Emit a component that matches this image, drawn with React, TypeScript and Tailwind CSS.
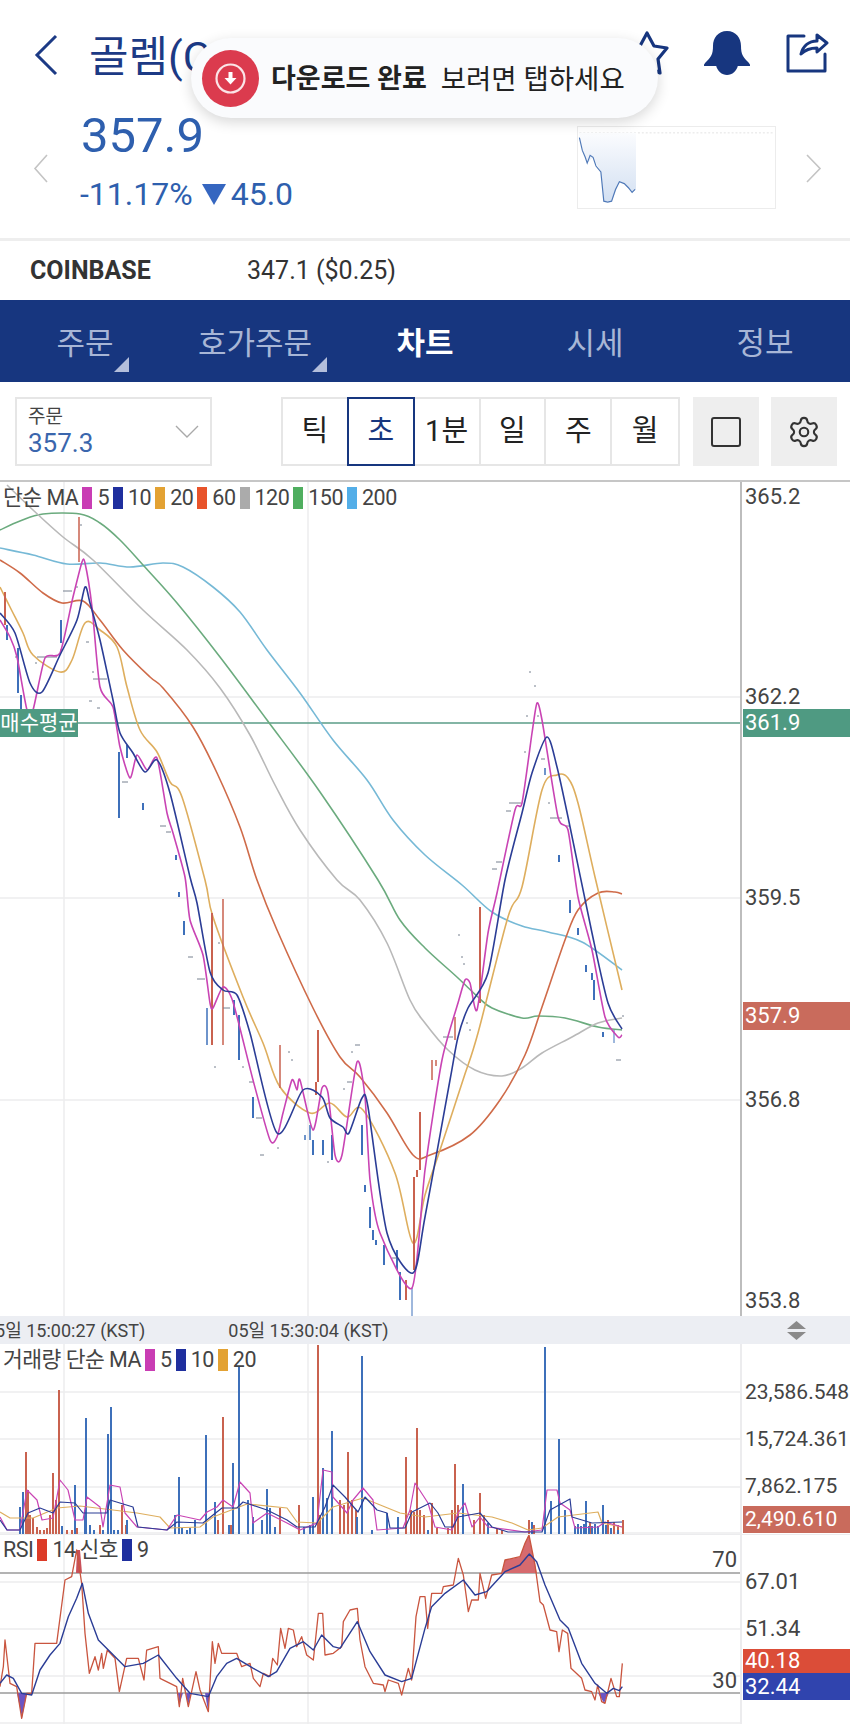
import React from 'react';
import { Settings } from 'lucide-react';

type Pt = number[];

const pts = (list: Pt[]) => list.map((p) => `${p[0]},${p[1]}`).join(' ');
// RSI lines were read off 3x crops, left half and right half of the page
const left = (list: Pt[]) => list.map((p) => [p[0] / 3, 1300 + p[1] / 3]);
const right = (list: Pt[]) => list.map((p) => [425 + p[0] / 3, 1300 + p[1] / 3]);

// catmull-rom through the points, the moving averages are smooth curves
const smooth = (list: Pt[], k = 1) => {
  let d = `M${list[0][0]} ${list[0][1]}`;
  for (let i = 0; i < list.length - 1; i++) {
    const p0 = list[i - 1] || list[i];
    const p1 = list[i];
    const p2 = list[i + 1];
    const p3 = list[i + 2] || p2;
    const c1x = p1[0] + ((p2[0] - p0[0]) / 6) * k;
    const c1y = p1[1] + ((p2[1] - p0[1]) / 6) * k;
    const c2x = p2[0] - ((p3[0] - p1[0]) / 6) * k;
    const c2y = p2[1] - ((p3[1] - p1[1]) / 6) * k;
    d += `C${c1x.toFixed(1)} ${c1y.toFixed(1)} ${c2x.toFixed(1)} ${c2y.toFixed(1)} ${p2[0]} ${p2[1]}`;
  }
  return d;
};

const COLORS = {
  ma5: '#c944b4',
  ma10: '#2b3d96',
  ma20: '#deae5e',
  ma60: '#cf6b49',
  ma120: '#b9b9b9',
  ma150: '#6bab7e',
  ma200: '#76b9d6',
  up: '#c9624f',
  down: '#3e70ba',
};

const ma150: Pt[] = [[0,530],[20,521],[43,514],[80,514],[100,523],[120,540],[143,565],[177,603],[220,657],[267,720],[320,792],[378,880],[400,920],[425,948],[458,978],[478,997],[492,1008],[522,1018],[538,1016],[565,1018],[598,1027],[622,1030]];
const ma200: Pt[] = [[0,548],[33,555],[67,564],[100,563],[130,567],[163,563],[183,567],[213,587],[240,612],[267,650],[300,693],[333,740],[367,780],[393,820],[425,855],[462,885],[492,912],[522,926],[548,932],[582,942],[622,970]];
const ma120: Pt[] = [[7,485],[33,510],[63,537],[93,560],[143,610],[187,650],[220,688],[250,735],[275,785],[300,830],[337,880],[360,900],[387,943],[410,1000],[425,1023],[448,1050],[475,1070],[502,1076],[522,1068],[542,1053],[572,1037],[598,1023],[622,1018]];
const ma60: Pt[] = [[0,560],[20,573],[43,593],[62,603],[83,601],[100,620],[123,650],[150,677],[163,688],[193,727],[217,773],[240,827],[257,880],[277,930],[313,1008],[340,1057],[360,1077],[387,1113],[413,1155],[430,1155],[470,1135],[500,1100],[525,1055],[542,1007],[565,940],[578,910],[598,893],[615,892],[622,894]];
const ma20: Pt[] = [[0,587],[10,607],[23,633],[33,655],[60,672],[72,660],[85,623],[100,630],[117,647],[127,687],[140,730],[157,752],[170,782],[182,797],[205,880],[213,917],[243,997],[263,1043],[280,1087],[310,1113],[330,1103],[347,1117],[363,1110],[395,1173],[413,1243],[425,1195],[440,1150],[463,1080],[478,1033],[508,917],[522,887],[542,790],[557,775],[568,778],[578,803],[595,877],[622,990]];
const ma10: Pt[] = [[0,613],[15,633],[30,683],[42,692],[60,655],[77,620],[85,587],[90,603],[100,640],[113,700],[120,733],[133,753],[145,772],[157,760],[170,793],[190,877],[197,903],[210,972],[223,990],[237,995],[250,1033],[277,1133],[303,1090],[322,1097],[330,1118],[343,1127],[349,1133],[362,1098],[368,1107],[387,1233],[413,1273],[425,1217],[450,1080],[458,1037],[468,1008],[488,973],[505,880],[522,813],[532,773],[547,737],[557,767],[568,817],[592,933],[608,1003],[622,1029]];
const ma5: Pt[] = [[0,620],[10,637],[17,657],[27,710],[33,710],[45,658],[60,653],[73,597],[82,562],[85,563],[92,607],[100,687],[113,707],[120,747],[130,778],[137,755],[147,770],[157,758],[167,813],[173,833],[185,877],[190,920],[203,955],[210,1003],[213,1008],[223,987],[233,1002],[253,1080],[270,1140],[277,1137],[283,1113],[292,1080],[297,1090],[300,1080],[313,1130],[322,1088],[328,1093],[335,1155],[342,1155],[357,1062],[365,1097],[370,1180],[380,1233],[412,1288],[425,1170],[442,1060],[458,1003],[465,980],[470,983],[477,1010],[488,933],[497,893],[515,810],[522,803],[532,733],[537,703],[542,720],[558,817],[568,830],[578,897],[592,950],[605,1017],[618,1037],[622,1035]];

// x, top, bottom, width
const candles: { c: string; b: number[][] }[] = [
  { c: COLORS.up, b: [[79,517,562,1.5],[5,592,625,2],[212,913,1045,2],[223,899,1045,1.5],[280,1045,1088,1.5],[318,1030,1082,2],[316,1082,1095,2],[406,1280,1300,2],[414,1177,1270,2],[417,1170,1177,2],[420,1112,1170,2],[432,1060,1080,1.5],[436,1060,1066,1.5],[455,1017,1040,1.5],[480,907,1003,2]] },
  { c: COLORS.down, b: [[7,625,640,2],[18,648,693,2],[21,695,715,2],[61,620,643,2],[119,752,818,2],[127,745,758,2],[143,803,810,2],[176,855,860,2],[179,892,897,2],[184,921,935,2],[207,1008,1045,1.5],[234,1000,1015,2],[239,1015,1060,2],[253,1097,1118,2],[305,1135,1140,1.5],[310,1125,1140,1.5],[313,1140,1155,2],[323,1140,1155,2],[332,1135,1160,2],[362,1125,1155,2],[365,1185,1192,2],[370,1207,1228,2],[373,1230,1240,2],[376,1240,1245,2],[384,1245,1265,2],[397,1250,1270,2],[400,1272,1300,2],[412,1288,1316,1],[545,768,775,1.5],[559,855,862,2],[570,900,913,2],[578,928,935,2],[586,965,972,2],[592,973,980,2],[594,980,1000,2],[603,1032,1037,2],[614,1030,1043,1]] },
];

const dashes: number[][] = [[80,525,2],[63,591,9],[75,587,3],[86,642,3],[92,672,2],[93,679,14],[89,701,3],[97,708,3],[35,663,2],[15,657,2],[37,657,20],[60,650,3],[122,782,6],[160,826,6],[166,832,5],[188,957,5],[197,979,8],[218,943,2],[223,1008,7],[214,1067,2],[242,1067,2],[249,1082,5],[256,1118,6],[260,1155,4],[277,1148,2],[288,1052,2],[291,1060,2],[355,1045,5],[351,1052,2],[347,1082,5],[343,1089,2],[327,1162,2],[392,1258,5],[529,672,2],[534,686,2],[526,716,2],[537,716,2],[524,752,2],[541,759,4],[509,803,12],[506,811,5],[548,803,2],[550,818,12],[566,826,4],[496,862,6],[492,869,5],[458,935,2],[461,957,2],[463,964,2],[443,1037,10],[466,1023,2],[469,1030,2],[616,1060,5],[622,1016,2]];

const volUp: number[][] = [[26,1452],[28,1490],[53,1473],[59,1390],[223,1417],[318,1345],[348,1452],[406,1457],[417,1428],[455,1464],[480,1493],[529,1520],[623,1520],[608,1520],[30,1515],[33,1518],[37,1527],[40,1530],[44,1530],[47,1528],[50,1515],[56,1500],[62,1530],[67,1530],[72,1530],[77,1528],[100,1525],[122,1505],[126,1525],[218,1520],[231,1525],[280,1508],[299,1505],[320,1515],[340,1500],[344,1505],[352,1500],[356,1510],[411,1510],[414,1512],[420,1510],[424,1515],[432,1503],[437,1528],[448,1528],[452,1510],[458,1505],[474,1520],[484,1515],[497,1528],[502,1530],[534,1525],[614,1522],[618,1525],[590,1522]];
const volDown: number[][] = [[23,1492],[20,1507],[75,1485],[86,1418],[108,1434],[111,1407],[179,1477],[206,1435],[233,1463],[239,1367],[248,1500],[267,1489],[313,1497],[323,1468],[327,1498],[332,1431],[362,1356],[398,1517],[463,1484],[488,1523],[532,1522],[545,1347],[551,1501],[559,1439],[565,1510],[586,1501],[603,1505],[62,1526],[85,1510],[90,1525],[94,1530],[103,1530],[114,1530],[118,1530],[127,1520],[175,1515],[182,1528],[187,1530],[190,1528],[195,1520],[215,1502],[229,1525],[253,1517],[262,1520],[270,1508],[275,1527],[304,1527],[310,1525],[357,1517],[372,1530],[387,1513],[428,1530],[575,1526],[578,1524],[581,1526],[584,1524],[589,1526],[592,1526],[595,1524],[598,1526],[606,1525],[611,1528],[618,1530]];

const volMa5: Pt[] = [[0,1517],[7,1530],[20,1530],[27,1490],[37,1500],[42,1520],[53,1518],[60,1480],[68,1490],[75,1520],[83,1520],[87,1497],[100,1507],[103,1527],[110,1485],[120,1487],[125,1513],[137,1527],[167,1530],[177,1515],[200,1520],[207,1512],[217,1507],[223,1500],[233,1507],[240,1482],[250,1493],[253,1523],[267,1513],[287,1523],[300,1530],[317,1523],[323,1470],[332,1472],[333,1497],[347,1513],[353,1500],[363,1488],[373,1500],[377,1530],[403,1528],[410,1510],[415,1483],[428,1503],[435,1527],[452,1530],[458,1513],[465,1503],[472,1527],[480,1517],[488,1527],[525,1532],[542,1530],[547,1490],[557,1490],[560,1503],[570,1510],[575,1528],[598,1527],[605,1522],[622,1527]];
const volMa10: Pt[] = [[0,1520],[7,1530],[20,1530],[28,1513],[40,1508],[53,1513],[60,1502],[75,1503],[83,1513],[107,1513],[110,1500],[133,1507],[138,1527],[167,1530],[177,1522],[203,1523],[213,1515],[222,1508],[237,1508],[243,1502],[267,1510],[287,1520],[297,1527],[315,1527],[325,1507],[333,1485],[345,1497],[358,1512],[365,1497],[377,1510],[387,1513],[390,1528],[405,1528],[412,1512],[430,1503],[438,1513],[445,1527],[453,1527],[458,1517],[480,1513],[492,1527],[508,1532],[542,1532],[550,1510],[570,1499],[572,1517],[592,1523],[622,1522]];
const volMa20: Pt[] = [[0,1512],[10,1518],[33,1518],[57,1508],[80,1506],[113,1510],[137,1513],[160,1517],[170,1528],[200,1527],[213,1517],[247,1504],[287,1508],[297,1522],[317,1523],[333,1507],[363,1498],[400,1513],[425,1517],[458,1513],[492,1517],[512,1523],[528,1530],[542,1528],[558,1517],[598,1512],[602,1523],[622,1527]];

const rsiLine: Pt[] = [
  ...left([[0,1160],[10,1100],[15,1020],[30,1150],[50,1160],[65,1255],[80,1180],[95,1180],[105,1030],[170,1030],[195,840],[215,830],[230,750],[245,850],[255,1000],[268,1120],[285,1070],[295,1110],[305,1060],[310,1105],[322,1050],[345,1075],[358,1175],[380,1075],[415,1075],[432,1140],[440,1050],[475,1040],[480,1135],[530,1160],[538,1220],[548,1135],[565,1220],[588,1115],[600,1170],[625,1235],[637,1025],[645,1090],[655,1030],[665,1060],[710,1060],[725,1100],[750,1090],[760,1135],[780,1160],[790,1120],[810,1130],[818,1075],[832,1095],[842,985],[855,1045],[865,985],[880,990],[890,1040],[905,1010],[920,1065],[940,1080],[955,940],[968,940],[975,1065],[1000,1060],[1025,1040],[1030,965],[1050,930],[1072,925],[1080,1020],[1095,1100],[1120,1150],[1150,1155],[1155,1175],[1165,1140],[1195,1150],[1205,1185],[1225,1105],[1235,1140],[1248,950],[1260,890],[1275,890]]),
  ...right([[8,985],[20,880],[50,880],[55,860],[85,855],[100,775],[115,825],[130,935],[140,900],[160,900],[165,820],[182,895],[200,825],[230,820],[240,780],[285,770],[300,730],[312,705],[330,795],[345,905],[355,915],[375,990],[395,995],[402,1055],[412,990],[428,1000],[438,1105],[470,1135],[480,1170],[500,1175],[510,1200],[518,1155],[530,1205],[540,1210],[558,1135],[575,1190],[583,1190],[592,1090]]),
];
const rsiSignal: Pt[] = [
  ...left([[0,1150],[20,1125],[40,1135],[65,1180],[95,1185],[120,1110],[150,1065],[180,1030],[205,950],[230,895],[247,850],[265,940],[295,1020],[340,1065],[375,1100],[430,1090],[475,1065],[530,1135],[570,1180],[625,1190],[650,1130],[680,1090],[710,1075],[760,1105],[805,1130],[830,1115],[870,1045],[910,1025],[940,1050],[965,1005],[1000,1040],[1020,1045],[1072,965],[1110,1055],[1155,1125],[1205,1145],[1235,1135],[1275,985]]),
  ...right([[20,920],[60,880],[115,840],[150,885],[185,875],[240,815],[285,795],[313,762],[335,785],[360,855],[405,960],[430,985],[470,1090],[510,1150],[545,1180],[565,1165],[583,1172],[592,1160]]),
];

function Line({ data, color, width = 1.4 }: { data: Pt[]; color: string; width?: number }) {
  return <polyline points={pts(data)} fill="none" stroke={color} strokeWidth={width} strokeLinejoin="round" />;
}

function Curve({ data, color, width = 1.6, k = 1 }: { data: Pt[]; color: string; width?: number; k?: number }) {
  return <path d={smooth(data, k)} fill="none" stroke={color} strokeWidth={width} />;
}

function Grid({ ys, top, bottom }: { ys: number[]; top: number; bottom: number }) {
  return (
    <g stroke="#ececee" strokeWidth={1.5}>
      {ys.map((y) => <line key={y} x1={0} x2={740} y1={y} y2={y} />)}
      <line x1={64} x2={64} y1={top} y2={bottom} />
      <line x1={308} x2={308} y1={top} y2={bottom} />
    </g>
  );
}

function Legend({ label, items, top }: { label: React.ReactNode; items: [string, string][]; top: string }) {
  return (
    <div className={`absolute left-[3px] ${top} flex items-center h-[22px] text-[21.5px] tracking-[-0.5px] text-[#444] leading-none`}>
      <span className="whitespace-pre">{label}</span>
      {items.map(([color, text], i) => (
        <React.Fragment key={i}>
          {color === '' ? (
            <span className="ml-[4px]">{text}</span>
          ) : (
            <>
              <span className="ml-[4px] w-[10px] h-[22px]" style={{ background: color }} />
              <span className="ml-[5px]">{text}</span>
            </>
          )}
        </React.Fragment>
      ))}
    </div>
  );
}

function AxisText({ y, size = 'text-[22px]', children }: { y: number; size?: string; children: React.ReactNode }) {
  return (
    <div className={`absolute left-[3px] ${size} leading-[26px] text-[#444] whitespace-nowrap`} style={{ top: y - 13 }}>
      {children}
    </div>
  );
}

function AxisTag({ y, h, color, size = 'text-[22px]', children }: { y: number; h: number; color: string; size?: string; children: React.ReactNode }) {
  return (
    <div className={`absolute left-[1px] right-0 pl-[2px] flex items-center text-white ${size} leading-none`} style={{ top: y, height: h, background: color }}>
      {children}
    </div>
  );
}

export default function App() {
  return (
    <div className="relative w-[850px] h-[1724px] overflow-hidden bg-white [font-family:Roboto,'Noto_Sans_CJK_KR',sans-serif]">
      {/* header */}
      <div className="h-[238px]">
        <div className="h-[112px] flex items-start">
          <svg className="mt-[34px] ml-[34px] w-[24px] h-[42px]" viewBox="0 0 24 42" fill="none" stroke="#1c3a85" strokeWidth={3}>
            <path d="M22 2 3 21l19 19" />
          </svg>
          <span className="mt-[34px] ml-[31px] text-[43px] leading-[46px] text-[#1c3a85]">골렘(C</span>
          <svg className="ml-auto mt-[30px] mr-[33px] w-[46px] h-[46px]" viewBox="625 30 46 46" fill="none" stroke="#17367f" strokeWidth={3.2} strokeLinejoin="round">
            <path d="M647 33L654 46 667 48 658 59 660 73 647 66 634 73 636 59 627 48 640 46z" />
          </svg>
          <svg className="mt-[31px] mr-[35px] w-[46px] h-[44px]" viewBox="0 0 46 44" fill="#17367f">
            <path d="M23 0c9 0 14 7 14 15 0 8 2 11 6 15 2 2 3 3 3 4v1H0v-1c0-1 1-2 3-4 4-4 6-7 6-15C9 7 14 0 23 0z" />
            <path d="M12 34h22c-1 6-6 10-11 10s-10-4-11-10z" />
          </svg>
          <svg className="mt-[33px] mr-[21px] w-[44px] h-[40px]" viewBox="0 0 44 40" fill="none" stroke="#17367f" strokeWidth={3} strokeLinejoin="round" strokeLinecap="round">
            <path d="M19 3H3v35h37V21" />
            <path d="M42 10 32 2v6C24 8 18 13 16 21c4-4 10-6 16-6v4z" />
          </svg>
        </div>
        <div className="flex items-start">
          <svg className="mt-[42px] ml-[33px] w-[15px] h-[29px] shrink-0" viewBox="0 0 15 29" fill="none" stroke="#c4c4c4" strokeWidth={1.6}>
            <path d="M14 1 2 14.5 14 28" />
          </svg>
          <div className="ml-[33px] text-[#2e5fae]">
            <div className="text-[49px] leading-[48px]">357.9</div>
            <div className="mt-[14px] flex items-center text-[32px] leading-[40px] -ml-[1px]">
              <span>-11.17%</span>
              <svg className="ml-[9px] mr-[5px] w-[24px] h-[21px]" viewBox="0 0 24 21" fill="#3566c0"><path d="M0 0h24L12 21z" /></svg>
              <span>45.0</span>
            </div>
          </div>
          <svg className="ml-auto mt-[14px] w-[199px] h-[83px] border border-[#ececec]" viewBox="577 126 199 83">
            <defs>
              <linearGradient id="spark" x1="0" y1="0" x2="0" y2="1">
                <stop offset="0" stopColor="#fbfcfe" />
                <stop offset="1" stopColor="#d3e0f2" />
              </linearGradient>
            </defs>
            <line x1={577} x2={776} y1={132} y2={132} stroke="#e2e2e2" strokeDasharray="2 2" />
            <path d="M577 137L583 157 585 163 591 157 599 172 602 202 610 202 618 182 623 183 631 193 635 190 635 132 577 132z" fill="url(#spark)" />
            <polyline points="577,137 580,150 583,157 585,163 588,155 591,157 594,166 599,172 602,202 606,203 610,202 614,190 618,182 623,184 627,188 631,193 634,190" fill="none" stroke="#4f79b8" strokeWidth={1.2} />
          </svg>
          <svg className="mt-[42px] ml-[30px] mr-[28px] w-[16px] h-[29px] shrink-0" viewBox="0 0 16 29" fill="none" stroke="#c4c4c4" strokeWidth={1.6}>
            <path d="M1 1l13 13.5L1 28" />
          </svg>
        </div>
      </div>

      <div className="h-[3px] bg-[#eeeeee]" />
      <div className="h-[59px] flex items-center pl-[30px] text-[25px] text-[#333]">
        <span className="w-[217px] font-bold">COINBASE</span>
        <span>347.1 ($0.25)</span>
      </div>

      {/* tabs */}
      <div className="h-[82px] grid grid-cols-5 bg-[#17367f] text-[31px] text-[#a8b6d6]">
        {['주문', '호가주문', '차트', '시세', '정보'].map((t, i) => (
          <div key={t} className="flex items-center justify-center pt-[6px]">
            <span className={`relative leading-[28px] ${i === 2 ? 'font-bold text-white' : ''}`}>
              {t}
              {i < 2 && (
                <svg className="absolute left-full top-[27px] w-[15px] h-[15px]" viewBox="0 0 15 15" fill="#b3bedb"><path d="M15 0v15H0z" /></svg>
              )}
            </span>
          </div>
        ))}
      </div>

      {/* toolbar */}
      <div className="h-[100px] pt-[15px] pl-[15px] flex items-start border-b-2 border-[#c6c6c6]">
        <div className="w-[197px] h-[69px] border-2 border-[#e6e6e6] pl-[11px] pr-[11px] flex items-center justify-between">
          <div>
            <div className="text-[19px] leading-[22px] text-[#444]">주문</div>
            <div className="text-[26px] leading-[30px] text-[#3a66ad]">357.3</div>
          </div>
          <svg className="w-[24px] h-[13px]" viewBox="0 0 24 13" fill="none" stroke="#a9a9a9" strokeWidth={1.4}><path d="M1 1l11 11L23 1" /></svg>
        </div>
        <div className="ml-[69px] w-[399px] h-[69px] border-2 border-[#e6e6e6] grid grid-cols-6 text-[29px] text-[#222]">
          {['틱', '초', '1분', '일', '주', '월'].map((t) => (
            <div key={t} className={t === '초' ? '-my-[2px] -ml-[2px] border-2 border-[#17367f] text-[#17367f] flex items-center justify-center' : 'border-r-2 last:border-r-0 border-[#e6e6e6] flex items-center justify-center'}>
              {t}
            </div>
          ))}
        </div>
        <div className="ml-[13px] w-[66px] h-[69px] bg-[#eeeeee] flex items-center justify-center">
          <div className="w-[30px] h-[30px] border-2 border-[#333] rounded-[3px]" />
        </div>
        <div className="ml-[12px] w-[66px] h-[69px] bg-[#eeeeee] flex items-center justify-center">
          <Settings size={34} strokeWidth={1.5} color="#333" />
        </div>
      </div>

      {/* price chart */}
      <div className="relative h-[834px] flex">
        <svg className="block w-[740px] h-[834px] shrink-0" viewBox="0 482 740 834">
          <Grid ys={[697, 898, 1100]} top={482} bottom={1316} />
          <line x1={0} x2={740} y1={723} y2={723} stroke="#5a9d87" strokeWidth={1.5} />
          <Curve data={ma200} color={COLORS.ma200} />
          <Curve data={ma150} color={COLORS.ma150} />
          <Curve data={ma120} color={COLORS.ma120} />
          <Curve data={ma60} color={COLORS.ma60} />
          <Curve data={ma20} color={COLORS.ma20} />
          {candles.map((g) => g.b.map((b, i) => (
            <line key={g.c + i} x1={b[0]} x2={b[0]} y1={b[1]} y2={b[2]} stroke={g.c} strokeWidth={b[3]} />
          )))}
          {dashes.map((d, i) => <line key={i} x1={d[0]} x2={d[0] + d[2]} y1={d[1]} y2={d[1]} stroke="#77808f" strokeWidth={1} />)}
          <Curve data={ma5} color={COLORS.ma5} k={0.7} />
          <Curve data={ma10} color={COLORS.ma10} k={0.8} />
        </svg>
        <Legend
          top="top-[5px]"
          label="단순 MA"
          items={[['#c93db4', '5'], ['#1f2f9e', '10'], ['#e3a233', '20'], ['#e8532a', '60'], ['#ababab', '120'], ['#4fae5f', '150'], ['#53aee8', '200']]}
        />
        <div className="absolute left-0 top-[227px] w-[78px] h-[28px] bg-[#4f9a82] text-white text-[21px] leading-none flex items-center justify-center">매수평균</div>
        <div className="relative flex-1 border-l-2 border-[#bdbdbd]">
          <AxisText y={15}>365.2</AxisText>
          <AxisText y={215}>362.2</AxisText>
          <AxisTag y={227} h={28} color="#4f9a82">361.9</AxisTag>
          <AxisText y={416}>359.5</AxisText>
          <AxisTag y={520} h={28} color="#c96b5c">357.9</AxisTag>
          <AxisText y={618}>356.8</AxisText>
          <AxisText y={819}>353.8</AxisText>
        </div>
      </div>

      {/* time strip */}
      <div className="relative h-[28px] bg-[#eceef3] flex items-center text-[18px] text-[#444] overflow-hidden">
        <span className="ml-[-15px] whitespace-nowrap">05일 15:00:27 (KST)</span>
        <span className="ml-[83px] whitespace-nowrap">05일 15:30:04 (KST)</span>
        <svg className="absolute left-[785px] top-[5px] w-[23px] h-[19px]" viewBox="0 0 23 19" fill="#8a8a8a">
          <path d="M11.500 0 21 8H2zM2 11h19l-9.500 8z" />
        </svg>
      </div>

      {/* volume */}
      <div className="relative h-[190px] flex">
        <svg className="block w-[740px] h-[190px] shrink-0" viewBox="0 1344 740 190">
          <Grid ys={[1392, 1439, 1487, 1533]} top={1344} bottom={1534} />
          {volUp.map((b, i) => <line key={i} x1={b[0]} x2={b[0]} y1={b[1]} y2={1534} stroke={COLORS.up} strokeWidth={2} />)}
          {volDown.map((b, i) => <line key={i} x1={b[0]} x2={b[0]} y1={b[1]} y2={1534} stroke={COLORS.down} strokeWidth={2} />)}
          <Line data={volMa20} color={COLORS.ma20} width={1.2} />
          <Line data={volMa5} color={COLORS.ma5} width={1.2} />
          <Line data={volMa10} color={COLORS.ma10} width={1.2} />
        </svg>
        <Legend top="top-[5px]" label="거래량 단순 MA" items={[['#c93db4', '5'], ['#1f2f9e', '10'], ['#e3a233', '20']]} />
        <div className="relative flex-1 border-l-2 border-[#ececee]">
          <AxisText y={48} size="text-[21px]">23,586.548</AxisText>
          <AxisText y={95} size="text-[21px]">15,724.361</AxisText>
          <AxisText y={142} size="text-[21px]">7,862.175</AxisText>
          <AxisTag y={162} h={27} color="#c96b5c" size="text-[21px]">2,490.610</AxisTag>
        </div>
      </div>

      {/* rsi */}
      <div className="relative h-[190px] flex border-t border-[#ececee]">
        <svg className="block w-[740px] h-[189px] shrink-0" viewBox="0 1535 740 189">
          <Grid ys={[1582, 1629, 1676, 1723]} top={1535} bottom={1724} />
          <g stroke="#9a9a9a" strokeWidth={1.5}>
            <line x1={0} x2={740} y1={1573} y2={1573} />
            <line x1={0} x2={740} y1={1693} y2={1693} />
          </g>
          <polygon points="76,1573 77,1550 80,1550 82,1573" fill="#c9505a" />
          <polygon points="502,1573 505,1560 520,1557 525,1543 529,1535 535,1565 537,1573" fill="#d66a6e" />
          <polygon points="17,1693 22,1718 27,1693" fill="#6b55c4" />
          <polygon points="178,1693 179,1706 183,1693" fill="#6b55c4" />
          <polygon points="186,1693 188,1706 191,1693" fill="#6b55c4" />
          <polygon points="205,1693 208,1711 210,1693" fill="#6b55c4" />
          <polygon points="598,1693 604,1703 609,1693" fill="#6b55c4" />
          <Line data={rsiLine} color="#c9553f" width={1.3} />
          <Line data={rsiSignal} color="#2b3d96" width={1.4} />
        </svg>
        <Legend
          top="top-[4px]"
          label="RSI"
          items={[['#dc3b28', '14'], ['', '신호'], ['#1f2f9e', '9']]}
        />
        <div className="absolute right-[113px] top-[12px] text-[22px] leading-[26px] text-[#444]">70</div>
        <div className="absolute right-[113px] top-[133px] text-[22px] leading-[26px] text-[#444]">30</div>
        <div className="relative flex-1 border-l-2 border-[#ececee]">
          <AxisText y={47}>67.01</AxisText>
          <AxisText y={94}>51.34</AxisText>
          <AxisTag y={114} h={24} color="#db4d38">40.18</AxisTag>
          <AxisTag y={138} h={27} color="#3044ae">32.44</AxisTag>
        </div>
      </div>

      {/* download toast */}
      <div className="absolute left-[191px] top-[38px] w-[467px] h-[80px] rounded-full bg-[#fafbfd] shadow-[0_4px_14px_rgba(0,0,0,0.16)] flex items-center pl-[11px]">
        <div className="w-[57px] h-[57px] rounded-full bg-[#db3b4e] flex items-center justify-center">
          <svg className="w-[31px] h-[31px]" viewBox="0 0 31 31" fill="none">
            <circle cx={15.500} cy={15.500} r={14} stroke="#fbe4e7" strokeWidth={2.2} />
            <path d="M13.500 9h4v6h4l-6 6.500-6-6.500h4z" fill="#ffffff" />
          </svg>
        </div>
        <span className="ml-[12px] pt-[3px] text-[27px] font-bold text-[#222] leading-none">다운로드 완료</span>
        <span className="ml-[14px] pt-[3px] text-[27.5px] text-[#222] leading-none">보려면 탭하세요</span>
      </div>
    </div>
  );
}
